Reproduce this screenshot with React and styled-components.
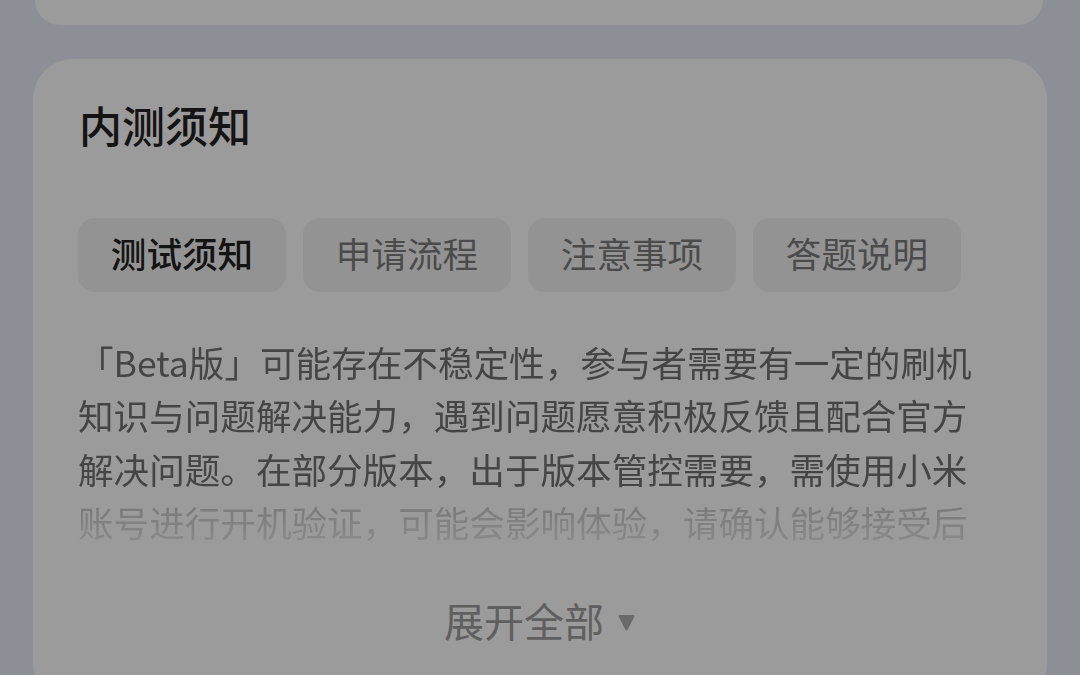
import React from "react";
import styled, { createGlobalStyle } from "styled-components";

const Global = createGlobalStyle`
  html, body {
    margin: 0;
    padding: 0;
    background: #8c9096;
    height: 100%;
    overflow: hidden;
  }
  body {
    font-family: "Noto Sans CJK SC", "Noto Sans", sans-serif;
  }
`;

const Page = styled.div`
  width: 1080px;
  height: 675px;
  padding: 0 33px;
  box-sizing: border-box;
  display: flex;
  flex-direction: column;
  overflow: hidden;
`;

const TopCard = styled.div`
  height: 25px;
  flex: none;
  background: #9b9b9b;
  border-radius: 0 0 40px 40px;
  margin: 0 4px 0 2px;
`;

const Card = styled.section`
  margin-top: 34px;
  flex: none;
  background: #9b9b9b;
  border-radius: 40px;
  padding: 40px 0 60px 46px;
  display: flex;
  flex-direction: column;
`;

const Title = styled.h2`
  margin: 0;
  font-size: 43px;
  line-height: 50px;
  font-weight: 500;
  color: #141414;
`;

const Tabs = styled.div`
  display: flex;
  gap: 17px;
  margin-top: 69px;
  margin-left: -1px;
`;

const Tab = styled.div`
  width: 208px;
  height: 74px;
  box-sizing: border-box;
  padding-bottom: 6px;
  border-radius: 17px;
  background: #939393;
  display: flex;
  align-items: center;
  justify-content: center;
  font-size: 35.6px;
  font-weight: ${(p) => (p.$active ? 500 : 400)};
  color: ${(p) => (p.$active ? "#141414" : "#4b4b4b")};
`;

const Body = styled.p`
  margin: 43px 0 0 -1px;
  width: 912px;
  font-size: 35.6px;
  line-height: 53.4px;
  color: #454545;
  height: 214px;
  overflow: hidden;
  -webkit-mask-image: linear-gradient(
    to bottom,
    #000 0,
    #000 164px,
    rgba(0, 0, 0, 0.38) 172px,
    rgba(0, 0, 0, 0.16) 214px
  );
  mask-image: linear-gradient(
    to bottom,
    #000 0,
    #000 164px,
    rgba(0, 0, 0, 0.38) 172px,
    rgba(0, 0, 0, 0.16) 214px
  );
`;

const Expand = styled.div`
  margin: 48px 46px 0 0;
  display: flex;
  align-items: center;
  justify-content: center;
  gap: 13px;
  font-size: 40px;
  line-height: 46px;
  color: #5f5f5f;
`;

const Caret = styled.svg`
  width: 19px;
  height: 19px;
  flex: none;
  margin-top: 4px;
`;

const tabs = ["测试须知", "申请流程", "注意事项", "答题说明"];

export default function App() {
  return (
    <>
      <Global />
      <Page>
        <TopCard />
        <Card>
          <Title>内测须知</Title>
          <Tabs>
            {tabs.map((t, i) => (
              <Tab key={t} $active={i === 0}>
                {t}
              </Tab>
            ))}
          </Tabs>
          <Body>
            「Beta版」可能存在不稳定性，参与者需要有一定的刷机知识与问题解决能力，遇到问题愿意积极反馈且配合官方解决问题。在部分版本，出于版本管控需要，需使用小米账号进行开机验证，可能会影响体验，请确认能够接受后
          </Body>
          <Expand>
            展开全部
            <Caret viewBox="0 0 19 19">
              <path
                d="M2.6 2 H16.4 Q18.2 2 17.3 3.7 L10.7 16.6 Q9.5 18.6 8.3 16.6 L1.7 3.7 Q0.8 2 2.6 2 Z"
                fill="#6a6a6a"
              />
            </Caret>
          </Expand>
        </Card>
      </Page>
    </>
  );
}
